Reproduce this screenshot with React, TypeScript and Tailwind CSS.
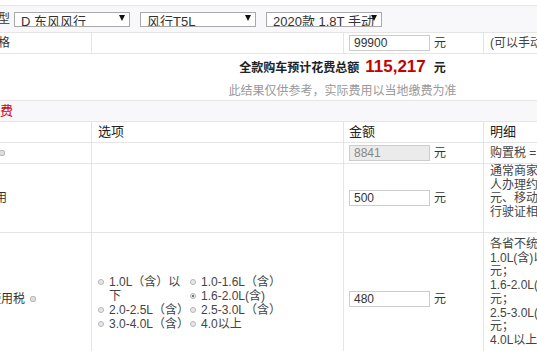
import React from 'react'

const font = { fontFamily: '"Liberation Sans", "Noto Sans CJK SC", sans-serif' }

const Select = ({ label }: { label: string }) => (
    <div className="relative h-[15px] w-[116px] overflow-hidden border border-[#a9a9a9] bg-white">
        <span className="block whitespace-nowrap pl-[6px] pt-[1px] text-[13px] leading-[16px] text-[#333]">
            {label}
        </span>
        <span className="absolute right-[4px] top-[2px] h-0 w-0 border-x-[3.5px] border-t-[6px] border-x-transparent border-t-[#111]" />
    </div>
)

const Info = () => (
    <span className="ml-[5px] inline-block h-[6px] w-[6px] rounded-[2px] border border-[#bbb] bg-[#ddd] align-middle" />
)

const Input = ({ value, disabled }: { value: string; disabled?: boolean }) => (
    <div className="flex items-center">
        <div
            className={`h-[16px] w-[81px] border border-[#ccc] pl-[4px] text-[12px] leading-[14px] ${
                disabled ? 'bg-[#ebebeb] text-[#888]' : 'bg-white text-[#333]'
            }`}
        >
            {value}
        </div>
        <span className="ml-[4px] text-[12px] text-[#333]">元</span>
    </div>
)

const Radio = ({ label, checked }: { label: string; checked?: boolean }) => (
    <div className="flex items-start text-[12px] leading-[14px] text-[#444]">
        <span className="mr-[5px] mt-[4px] flex h-[6px] w-[6px] shrink-0 items-center justify-center rounded-full border border-[#b5b5b5] bg-[#e8e8e8]">
            {checked && <span className="h-[2px] w-[2px] rounded-full bg-[#555]" />}
        </span>
        <span>{label}</span>
    </div>
)

export default function App() {
    return (
        <div className="h-[351px] w-[537px] overflow-hidden bg-white text-[12px] text-[#333]" style={font}>
            <div className="ml-[-50px] w-[785px]">
                {/* model select */}
                <div className="mt-[5px] flex h-[28px] items-center border-y border-[#e5e5e5] bg-[#f8f8fa]">
                    <span className="w-[60px] pl-[12px] text-[12px]">选择车型</span>
                    <div className="ml-[4px] flex gap-[10px]">
                        <Select label="D 东风风行" />
                        <Select label="风行T5L" />
                        <Select label="2020款 1.8T 手动" />
                    </div>
                </div>

                {/* price */}
                <div className="flex h-[21px] border-b border-[#e5e5e5]">
                    <div className="flex w-[142px] items-center border-r border-[#e5e5e5] pl-[12px]">裸车价格</div>
                    <div className="w-[252px] border-r border-[#e5e5e5]" />
                    <div className="flex w-[140px] items-center border-r border-[#e5e5e5] pl-[5px]">
                        <Input value="99900" />
                    </div>
                    <div className="flex items-center pl-[6px] text-[#444]">(可以手动修改)</div>
                </div>

                {/* total */}
                <div className="flex h-[47px] flex-col items-center justify-center border-b border-[#e5e5e5]">
                    <div className="flex items-baseline font-bold">
                        <span className="text-[12px] text-[#222]">全款购车预计花费总额</span>
                        <span className="ml-[6px] text-[17px] text-[#c40000]">115,217</span>
                        <span className="ml-[8px] text-[12px] text-[#222]">元</span>
                    </div>
                    <div className="mt-[3px] text-[12px] text-[#999]">此结果仅供参考，实际费用以当地缴费为准</div>
                </div>

                {/* section heading */}
                <div className="flex h-[21px] items-center border-b border-[#e5e5e5] bg-[#f8f8fa] pl-[11px] text-[13px] text-[#d0021b]">
                    必要花费
                </div>

                {/* table head */}
                <div className="flex h-[21px] border-b border-[#e5e5e5] text-[13px] text-[#222]">
                    <div className="w-[142px] border-r border-[#e5e5e5]" />
                    <div className="flex w-[252px] items-center border-r border-[#e5e5e5] pl-[6px]">选项</div>
                    <div className="flex w-[140px] items-center border-r border-[#e5e5e5] pl-[5px]">金额</div>
                    <div className="flex items-center pl-[6px]">明细</div>
                </div>

                {/* purchase tax */}
                <div className="flex h-[21px] border-b border-[#e5e5e5]">
                    <div className="flex w-[142px] items-center border-r border-[#e5e5e5] pl-[8px]">
                        购置税
                        <Info />
                    </div>
                    <div className="w-[252px] border-r border-[#e5e5e5]" />
                    <div className="flex w-[140px] items-center border-r border-[#e5e5e5] pl-[5px]">
                        <Input value="8841" disabled />
                    </div>
                    <div className="flex items-center whitespace-nowrap pl-[6px] text-[#444]">购置税 = 购车价 / (1+13%) × 购置税率(10%)</div>
                </div>

                {/* plate fee */}
                <div className="flex h-[69px] border-b border-[#e5e5e5]">
                    <div className="flex w-[142px] items-center border-r border-[#e5e5e5] pl-[9px]">上牌费用</div>
                    <div className="w-[252px] border-r border-[#e5e5e5]" />
                    <div className="flex w-[140px] items-center border-r border-[#e5e5e5] pl-[5px]">
                        <Input value="500" />
                    </div>
                    <div className="w-[140px] overflow-hidden whitespace-nowrap pl-[6px] pt-[1px] text-[12px] leading-[13.5px] text-[#444]">
                        <div>通常商家提供的一条龙服务</div>
                        <div>人办理约373元，其中号牌费100</div>
                        <div>元、移动证费10元、检测费125元、</div>
                        <div>行驶证相片20元等</div>
                    </div>
                </div>

                {/* vehicle tax */}
                <div className="flex h-[130px] border-b border-[#e5e5e5]">
                    <div className="flex w-[142px] items-center border-r border-[#e5e5e5] pl-[15px] pt-[2px]">
                        车船使用税
                        <Info />
                    </div>
                    <div className="flex w-[252px] items-center border-r border-[#e5e5e5] pl-[6px] pt-[10px]">
                        <div className="grid grid-cols-[92px_100px]">
                            <div className="row-span-2">
                                <Radio label="1.0L（含）以下" />
                            </div>
                            <Radio label="1.0-1.6L（含）" />
                            <Radio label="1.6-2.0L(含)" checked />
                            <Radio label="2.0-2.5L（含）" />
                            <Radio label="2.5-3.0L（含）" />
                            <Radio label="3.0-4.0L（含）" />
                            <Radio label="4.0以上" />
                        </div>
                    </div>
                    <div className="flex w-[140px] items-center border-r border-[#e5e5e5] pl-[5px] pt-[2px]">
                        <Input value="480" />
                    </div>
                    <div className="w-[140px] overflow-hidden whitespace-nowrap pl-[6px] pt-[5px] text-[12px] leading-[13.7px] text-[#444]">
                        <div>各省不统一，以下为参考：</div>
                        <div>1.0L(含)以下300</div>
                        <div>元；</div>
                        <div>1.6-2.0L(含)480</div>
                        <div>元；</div>
                        <div>2.5-3.0L(含)1050</div>
                        <div>元；</div>
                        <div>4.0L以上4500元</div>
                    </div>
                </div>
            </div>
        </div>
    )
}
